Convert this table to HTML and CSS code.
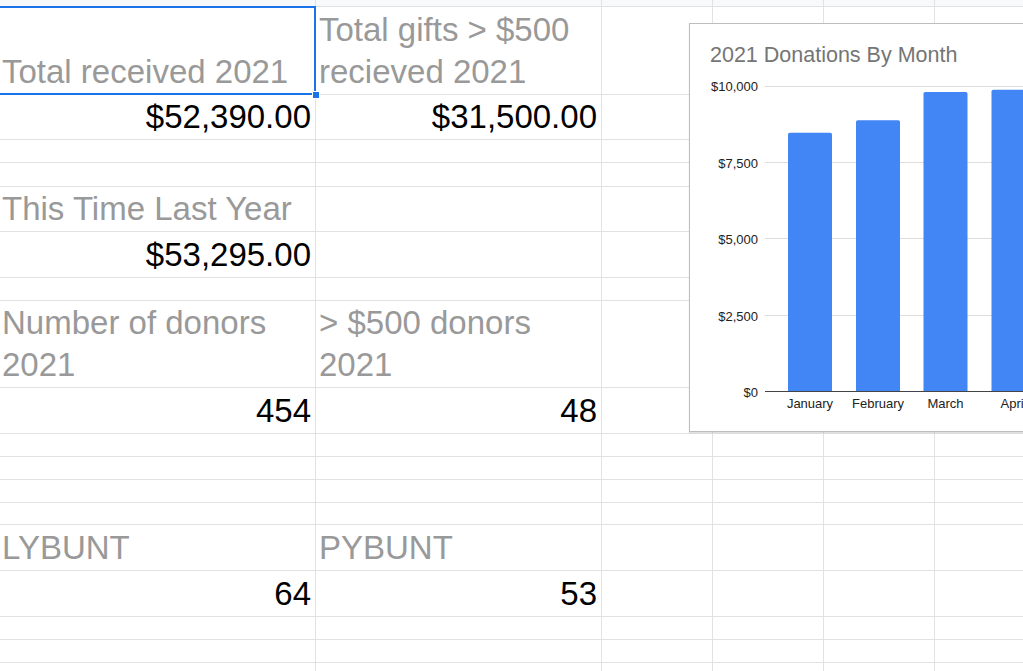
FILE: index.html
```html
<!DOCTYPE html>
<html>
<head>
<meta charset="utf-8">
<title>Donations Dashboard</title>
<link rel="stylesheet" href="styles.css">
</head>
<body>
<div class="sheet">
  <div class="row h7 top-strip">
    <div class="cell col-a"></div><div class="cell col-b"></div><div class="cell col-c"></div><div class="cell col-d"></div><div class="cell col-e"></div><div class="cell col-f"></div>
  </div>
  <div class="row h88">
    <div class="cell col-a label selected">Total received 2021<span class="sel-box"><span class="sel-handle"></span></span></div>
    <div class="cell col-b label">Total gifts &gt; $500 recieved 2021</div>
    <div class="cell col-c"></div><div class="cell col-d"></div><div class="cell col-e"></div><div class="cell col-f"></div>
  </div>
  <div class="row h45">
    <div class="cell col-a value">$52,390.00</div>
    <div class="cell col-b value">$31,500.00</div>
    <div class="cell col-c"></div><div class="cell col-d"></div><div class="cell col-e"></div><div class="cell col-f"></div>
  </div>
  <div class="row h23">
    <div class="cell col-a"></div><div class="cell col-b"></div><div class="cell col-c"></div><div class="cell col-d"></div><div class="cell col-e"></div><div class="cell col-f"></div>
  </div>
  <div class="row h24">
    <div class="cell col-a"></div><div class="cell col-b"></div><div class="cell col-c"></div><div class="cell col-d"></div><div class="cell col-e"></div><div class="cell col-f"></div>
  </div>
  <div class="row h45">
    <div class="cell col-a label">This Time Last Year</div>
    <div class="cell col-b"></div><div class="cell col-c"></div><div class="cell col-d"></div><div class="cell col-e"></div><div class="cell col-f"></div>
  </div>
  <div class="row h46">
    <div class="cell col-a value">$53,295.00</div>
    <div class="cell col-b"></div><div class="cell col-c"></div><div class="cell col-d"></div><div class="cell col-e"></div><div class="cell col-f"></div>
  </div>
  <div class="row h23">
    <div class="cell col-a"></div><div class="cell col-b"></div><div class="cell col-c"></div><div class="cell col-d"></div><div class="cell col-e"></div><div class="cell col-f"></div>
  </div>
  <div class="row h87">
    <div class="cell col-a label">Number of donors 2021</div>
    <div class="cell col-b label">&gt; $500 donors 2021</div>
    <div class="cell col-c"></div><div class="cell col-d"></div><div class="cell col-e"></div><div class="cell col-f"></div>
  </div>
  <div class="row h46">
    <div class="cell col-a value">454</div>
    <div class="cell col-b value">48</div>
    <div class="cell col-c"></div><div class="cell col-d"></div><div class="cell col-e"></div><div class="cell col-f"></div>
  </div>
  <div class="row h23">
    <div class="cell col-a"></div><div class="cell col-b"></div><div class="cell col-c"></div><div class="cell col-d"></div><div class="cell col-e"></div><div class="cell col-f"></div>
  </div>
  <div class="row h23">
    <div class="cell col-a"></div><div class="cell col-b"></div><div class="cell col-c"></div><div class="cell col-d"></div><div class="cell col-e"></div><div class="cell col-f"></div>
  </div>
  <div class="row h23">
    <div class="cell col-a"></div><div class="cell col-b"></div><div class="cell col-c"></div><div class="cell col-d"></div><div class="cell col-e"></div><div class="cell col-f"></div>
  </div>
  <div class="row h22">
    <div class="cell col-a"></div><div class="cell col-b"></div><div class="cell col-c"></div><div class="cell col-d"></div><div class="cell col-e"></div><div class="cell col-f"></div>
  </div>
  <div class="row h46">
    <div class="cell col-a label">LYBUNT</div>
    <div class="cell col-b label">PYBUNT</div>
    <div class="cell col-c"></div><div class="cell col-d"></div><div class="cell col-e"></div><div class="cell col-f"></div>
  </div>
  <div class="row h46">
    <div class="cell col-a value">64</div>
    <div class="cell col-b value">53</div>
    <div class="cell col-c"></div><div class="cell col-d"></div><div class="cell col-e"></div><div class="cell col-f"></div>
  </div>
  <div class="row h23">
    <div class="cell col-a"></div><div class="cell col-b"></div><div class="cell col-c"></div><div class="cell col-d"></div><div class="cell col-e"></div><div class="cell col-f"></div>
  </div>
  <div class="row h23">
    <div class="cell col-a"></div><div class="cell col-b"></div><div class="cell col-c"></div><div class="cell col-d"></div><div class="cell col-e"></div><div class="cell col-f"></div>
  </div>
  <div class="row h23">
    <div class="cell col-a"></div><div class="cell col-b"></div><div class="cell col-c"></div><div class="cell col-d"></div><div class="cell col-e"></div><div class="cell col-f"></div>
  </div>

  <div class="chart">
    <svg class="chart-svg" width="343" height="407" viewBox="690 24 343 407" xmlns="http://www.w3.org/2000/svg">
      <text class="chart-title" x="710" y="61.5">2021 Donations By Month</text>
      <g class="grid">
        <line x1="765" y1="86.5" x2="1040" y2="86.5"/>
        <line x1="765" y1="162.5" x2="1040" y2="162.5"/>
        <line x1="765" y1="238.5" x2="1040" y2="238.5"/>
        <line x1="765" y1="315.5" x2="1040" y2="315.5"/>
      </g>
      <g class="y-labels">
        <text x="758" y="91">$10,000</text>
        <text x="758" y="167.5">$7,500</text>
        <text x="758" y="243.5">$5,000</text>
        <text x="758" y="320.5">$2,500</text>
        <text x="758" y="396.5">$0</text>
      </g>
      <g class="bars">
        <path d="M788 391.5 V134.5 Q788 132.7 789.8 132.7 H830.2 Q832 132.7 832 134.5 V391.5 Z"/>
        <path d="M856 391.5 V122.1 Q856 120.3 857.8 120.3 H898.2 Q900 120.3 900 122.1 V391.5 Z"/>
        <path d="M923.5 391.5 V93.8 Q923.5 92 925.3 92 H965.7 Q967.5 92 967.5 93.8 V391.5 Z"/>
        <path d="M991.5 391.5 V91.5 Q991.5 89.7 993.3 89.7 H1033.7 Q1035.5 89.7 1035.5 91.5 V391.5 Z"/>
      </g>
      <line class="axis" x1="765" y1="391.5" x2="1040" y2="391.5"/>
      <g class="x-labels">
        <text x="810" y="407.5">January</text>
        <text x="878" y="407.5">February</text>
        <text x="945.5" y="407.5">March</text>
        <text x="1013.5" y="407.5">April</text>
      </g>
    </svg>
  </div>
</div>
</body>
</html>
```
FILE: styles.css
```css
html, body {
  margin: 0;
  padding: 0;
  overflow: hidden;
  background: #ffffff;
}

body {
  width: 1023px;
  height: 671px;
  font-family: "Liberation Sans", Arial, sans-serif;
}

.sheet {
  position: relative;
  width: 1100px;
  margin-left: -3px;
}

.row {
  display: flex;
  box-sizing: border-box;
  border-bottom: 1px solid #e2e2e2;
}

.top-strip {
  background: #f8f9fa;
}

.h7 { height: 7px; }
.h22 { height: 22px; }
.h23 { height: 23px; }
.h24 { height: 24px; }
.h45 { height: 45px; }
.h46 { height: 46px; }
.h87 { height: 87px; }
.h88 { height: 88px; }

.cell {
  box-sizing: border-box;
  border-right: 1px solid #e2e2e2;
  height: 100%;
  flex: none;
}

.col-a { width: 319px; }
.col-b { width: 286px; }
.col-c { width: 111px; }
.col-d { width: 111px; }
.col-e { width: 111px; }
.col-f { width: 200px; }

.label,
.value {
  display: flex;
  flex-direction: column;
  justify-content: flex-end;
  font-size: 33px;
  line-height: 42px;
  padding: 0 4px 1px 5px;
  white-space: normal;
}

.label {
  color: #999999;
}

.value {
  color: #000000;
  text-align: right;
}

.col-b.label {
  padding-left: 3px;
}

.selected {
  position: relative;
}

.sel-box {
  position: absolute;
  top: -1px;
  left: -1px;
  right: -1px;
  bottom: -1px;
  border: 2px solid #1a73e8;
  z-index: 2;
  pointer-events: none;
}

.sel-handle {
  position: absolute;
  right: -6px;
  bottom: -6px;
  width: 6px;
  height: 6px;
  background: #1a73e8;
  border: 1px solid #ffffff;
}

.chart {
  position: absolute;
  left: 692px;
  top: 23px;
  width: 345px;
  height: 409px;
  box-sizing: border-box;
  border: 1px solid #bdbdbd;
  background: #ffffff;
  box-shadow: 0 1px 1px rgba(0, 0, 0, 0.12);
  z-index: 5;
}

.chart-svg {
  display: block;
  font-family: "Liberation Sans", Arial, sans-serif;
}

.chart-title {
  font-size: 21.5px;
  fill: #757575;
}

.grid line {
  stroke: #dddddd;
  stroke-width: 1;
}

.axis {
  stroke: #444444;
  stroke-width: 1;
}

.y-labels text {
  font-size: 13px;
  fill: #222222;
  text-anchor: end;
}

.x-labels text {
  font-size: 13px;
  fill: #222222;
  text-anchor: middle;
}

.bars path {
  fill: #4285f4;
}
```
